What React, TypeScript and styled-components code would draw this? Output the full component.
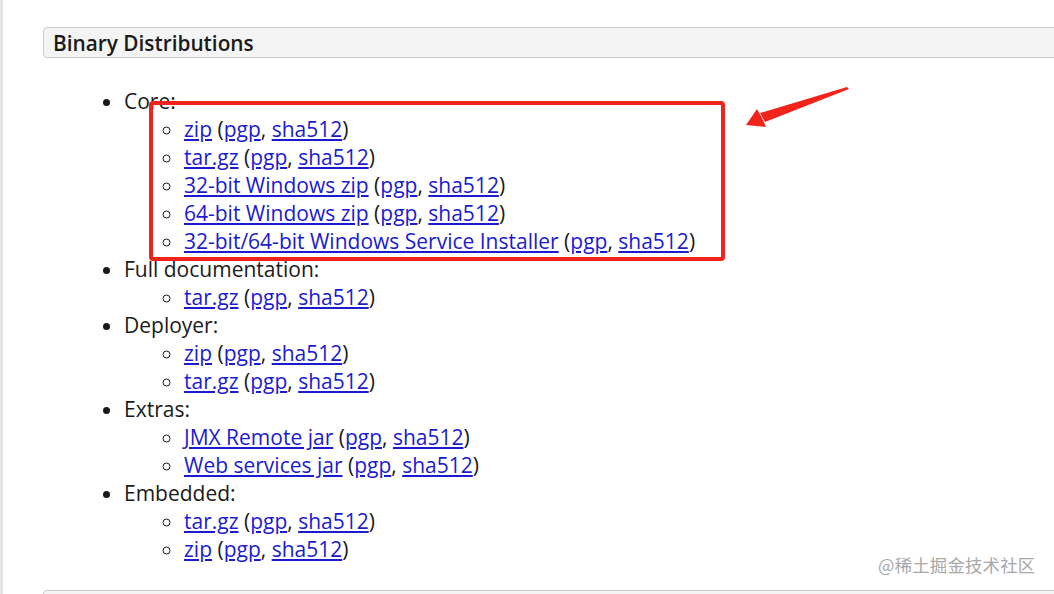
import { FunctionComponent } from "react";
import styled, { createGlobalStyle } from "styled-components";

const GlobalStyle = createGlobalStyle`
    html, body {
        margin: 0;
        padding: 0;
        background: #ffffff;
    }
    body {
        font-family: "Open Sans", "Noto Sans", sans-serif;
        color: #1a1a1a;
        overflow: hidden;
    }
`;

const Page = styled.div`
    position: relative;
    width: 1054px;
    height: 594px;
    box-sizing: border-box;
    border-left: 3px solid #e4e4e4;
    padding-left: 40px;
    padding-top: 27px;
    overflow: hidden;
`;

const SectionHeader = styled.h3`
    margin: 0 -20px 0 0;
    height: 31px;
    box-sizing: border-box;
    display: flex;
    align-items: center;
    padding-left: 9px;
    background: #f4f4f4;
    border: 1px solid #cdcdcd;
    border-radius: 4px 0 0 4px;
    font-size: 20.8px;
    font-weight: 600;
    color: #1a1a1a;
`;

const OuterList = styled.ul`
    margin: 29px 0 0 0;
    padding-left: 81px;
    list-style: disc;
    font-size: 21px;
    line-height: 28px;
`;

const InnerList = styled.ul`
    margin: 0;
    padding-left: 60px;
    list-style: circle;
`;

const Link = styled.a`
    color: #1b1bd0;
    text-decoration: underline;
    text-underline-offset: 2px;
`;

const NextHeader = styled.div`
    margin: 27px -20px 0 0;
    height: 31px;
    background: #f4f4f4;
    border: 1px solid #cdcdcd;
    border-radius: 4px 0 0 4px;
`;

const Highlight = styled.div`
    position: absolute;
    left: 146px;
    top: 101px;
    width: 576px;
    height: 160px;
    box-sizing: border-box;
    border: 4px solid #f2231b;
    border-radius: 4px;
    pointer-events: none;
`;

const Arrow = styled.svg`
    position: absolute;
    left: 740px;
    top: 84px;
`;

const Watermark = styled.div`
    position: absolute;
    left: 875px;
    top: 552px;
    font-family: "Noto Sans CJK SC", "Noto Sans", sans-serif;
    font-size: 17.4px;
    color: #a8a8a8;
    letter-spacing: 0.2px;
`;

interface DownloadProps {
    label: string;
}

const Download: FunctionComponent<DownloadProps> = ({ label }) => (
    <li>
        <Link href="#">{label}</Link> (<Link href="#">pgp</Link>, <Link href="#">sha512</Link>)
    </li>
);

const groups: { title: string; items: string[] }[] = [
    {
        title: "Core:",
        items: [
            "zip",
            "tar.gz",
            "32-bit Windows zip",
            "64-bit Windows zip",
            "32-bit/64-bit Windows Service Installer",
        ],
    },
    { title: "Full documentation:", items: ["tar.gz"] },
    { title: "Deployer:", items: ["zip", "tar.gz"] },
    { title: "Extras:", items: ["JMX Remote jar", "Web services jar"] },
    { title: "Embedded:", items: ["tar.gz", "zip"] },
];

const App: FunctionComponent = () => {
    return (
        <>
            <GlobalStyle />
            <Page>
                <SectionHeader>Binary Distributions</SectionHeader>
                <OuterList>
                    {groups.map((group) => (
                        <li key={group.title}>
                            {group.title}
                            <InnerList>
                                {group.items.map((item) => (
                                    <Download key={item} label={item} />
                                ))}
                            </InnerList>
                        </li>
                    ))}
                </OuterList>
                <NextHeader />
                <Highlight />
                <Arrow width="110" height="50" viewBox="0 0 110 50">
                    {/* shaft tapering toward the tail */}
                    <path d="M104 3 L106 5 L22 38 L17 29 Z" fill="#f2231b" />
                    {/* head */}
                    <path d="M3 41 L14 25 L19 34 L23 43 Z" fill="#f2231b" />
                </Arrow>
                <Watermark>@稀土掘金技术社区</Watermark>
            </Page>
        </>
    );
};

export default App;
